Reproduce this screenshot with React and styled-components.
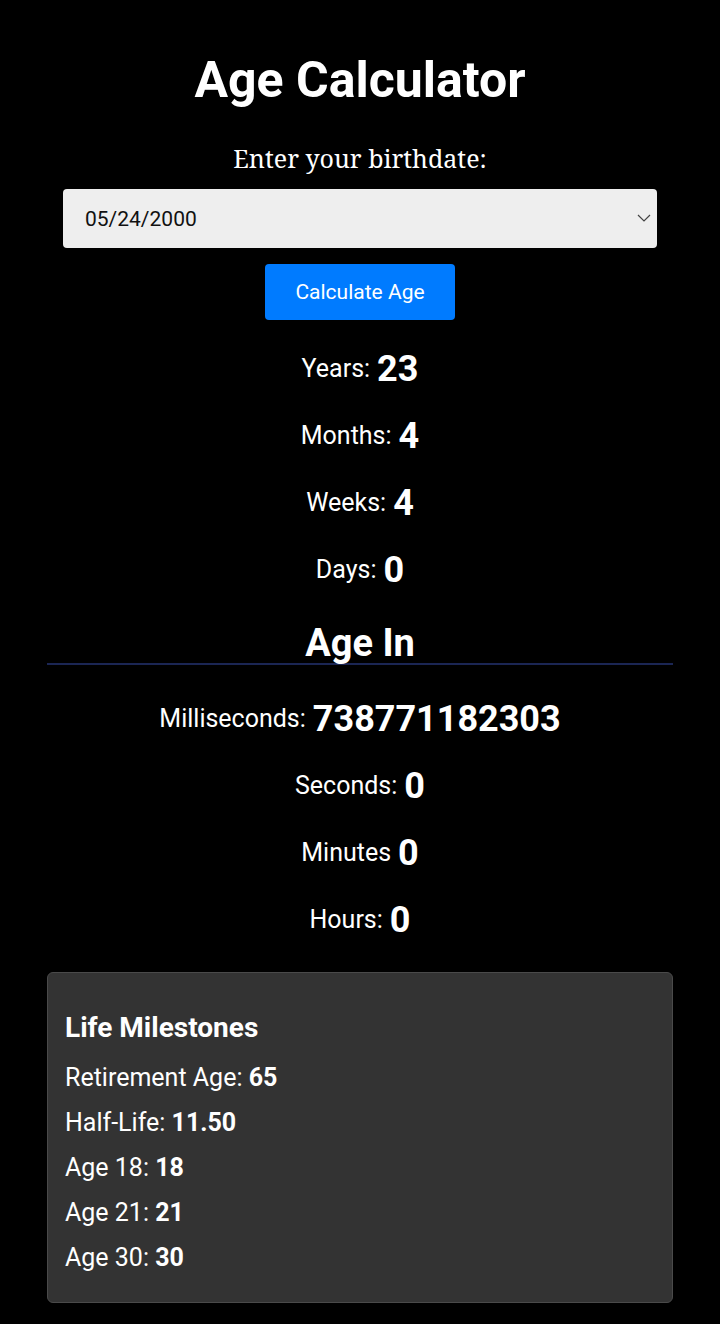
import React, { useState } from "react";
import styled, { createGlobalStyle } from "styled-components";

const GlobalStyle = createGlobalStyle`
  body {
    margin: 0;
    background: #000;
    color: #fff;
    font-family: Roboto, "Liberation Sans", sans-serif;
  }
`;

const Container = styled.div`
  width: 626px;
  margin: 0 auto;
  padding: 51px 0 20px;
  display: flex;
  flex-direction: column;
  align-items: center;
  text-align: center;
`;

const Title = styled.h1`
  margin: 0;
  font-size: 50px;
  line-height: 58px;
  font-weight: 700;
`;

const Label = styled.label`
  margin-top: 33px;
  font-family: "Noto Serif", "DejaVu Serif", serif;
  font-size: 25px;
  line-height: 32px;
`;

const SelectWrap = styled.div`
  position: relative;
  width: 594px;
  margin-top: 15px;
`;

const DateSelect = styled.select`
  width: 100%;
  height: 59px;
  padding: 0 22px;
  border: none;
  border-radius: 4px;
  background: #eeeeee;
  color: #111;
  font-family: Roboto, sans-serif;
  font-size: 21px;
  appearance: none;
  outline: none;
`;

const Chevron = styled.svg`
  position: absolute;
  right: 5px;
  top: 23px;
  pointer-events: none;
`;

const Button = styled.button`
  margin-top: 16px;
  width: 190px;
  height: 56px;
  border: none;
  border-radius: 4px;
  background: #007bff;
  color: #fff;
  font-family: Roboto, sans-serif;
  font-size: 21px;
  cursor: pointer;
`;

const Results = styled.div`
  margin-top: 15px;
  width: 100%;
`;

const Row = styled.div`
  height: 67px;
  display: flex;
  align-items: center;
  justify-content: center;
  font-size: 25px;
  b {
    font-size: 36px;
    margin-left: 7px;
  }
`;

const SubHeading = styled.h2`
  margin: 0;
  width: 100%;
  padding-top: 20px;
  font-size: 38px;
  line-height: 40px;
  font-weight: 700;
  border-bottom: 2px solid #1b2654;
`;

const Units = styled.div`
  margin-top: 20px;
  width: 100%;
`;

const Card = styled.div`
  box-sizing: border-box;
  margin-top: 19px;
  width: 100%;
  padding: 40px 17px 22px;
  background: #333333;
  border: 1px solid #4a4a4a;
  border-radius: 6px;
  text-align: left;
`;

const CardTitle = styled.h3`
  margin: 0 0 12px;
  font-size: 28px;
  line-height: 30px;
  font-weight: 700;
`;

const Item = styled.p`
  margin: 0;
  font-size: 25px;
  line-height: 45px;
`;

const units = [
  ["Years:", "23"],
  ["Months:", "4"],
  ["Weeks:", "4"],
  ["Days:", "0"],
];

const timeUnits = [
  ["Milliseconds:", "738771182303"],
  ["Seconds:", "0"],
  ["Minutes", "0"],
  ["Hours:", "0"],
];

const milestones = [
  ["Retirement Age:", "65"],
  ["Half-Life:", "11.50"],
  ["Age 18:", "18"],
  ["Age 21:", "21"],
  ["Age 30:", "30"],
];

const App = () => {
  const [date, setDate] = useState("2000-05-24");

  return (
    <Container>
      <GlobalStyle />
      <Title>Age Calculator</Title>
      <Label htmlFor="birth">Enter your birthdate:</Label>
      <SelectWrap>
        <DateSelect id="birth" value={date} onChange={(e) => setDate(e.target.value)}>
          <option value="2000-05-24">05/24/2000</option>
        </DateSelect>
        <Chevron width="16" height="12" viewBox="0 0 16 12">
          <path d="M2 3 L8 9 L14 3" fill="none" stroke="#444" strokeWidth="1.2" />
        </Chevron>
      </SelectWrap>
      <Button>Calculate Age</Button>

      <Results>
        {units.map(([label, value]) => (
          <Row key={label}>
            {label} <b>{value}</b>
          </Row>
        ))}
      </Results>

      <SubHeading>Age In</SubHeading>

      <Units>
        {timeUnits.map(([label, value]) => (
          <Row key={label}>
            {label} <b>{value}</b>
          </Row>
        ))}
      </Units>

      <Card>
        <CardTitle>Life Milestones</CardTitle>
        {milestones.map(([label, value]) => (
          <Item key={label}>
            {label} <b>{value}</b>
          </Item>
        ))}
      </Card>
    </Container>
  );
};

export default App;
